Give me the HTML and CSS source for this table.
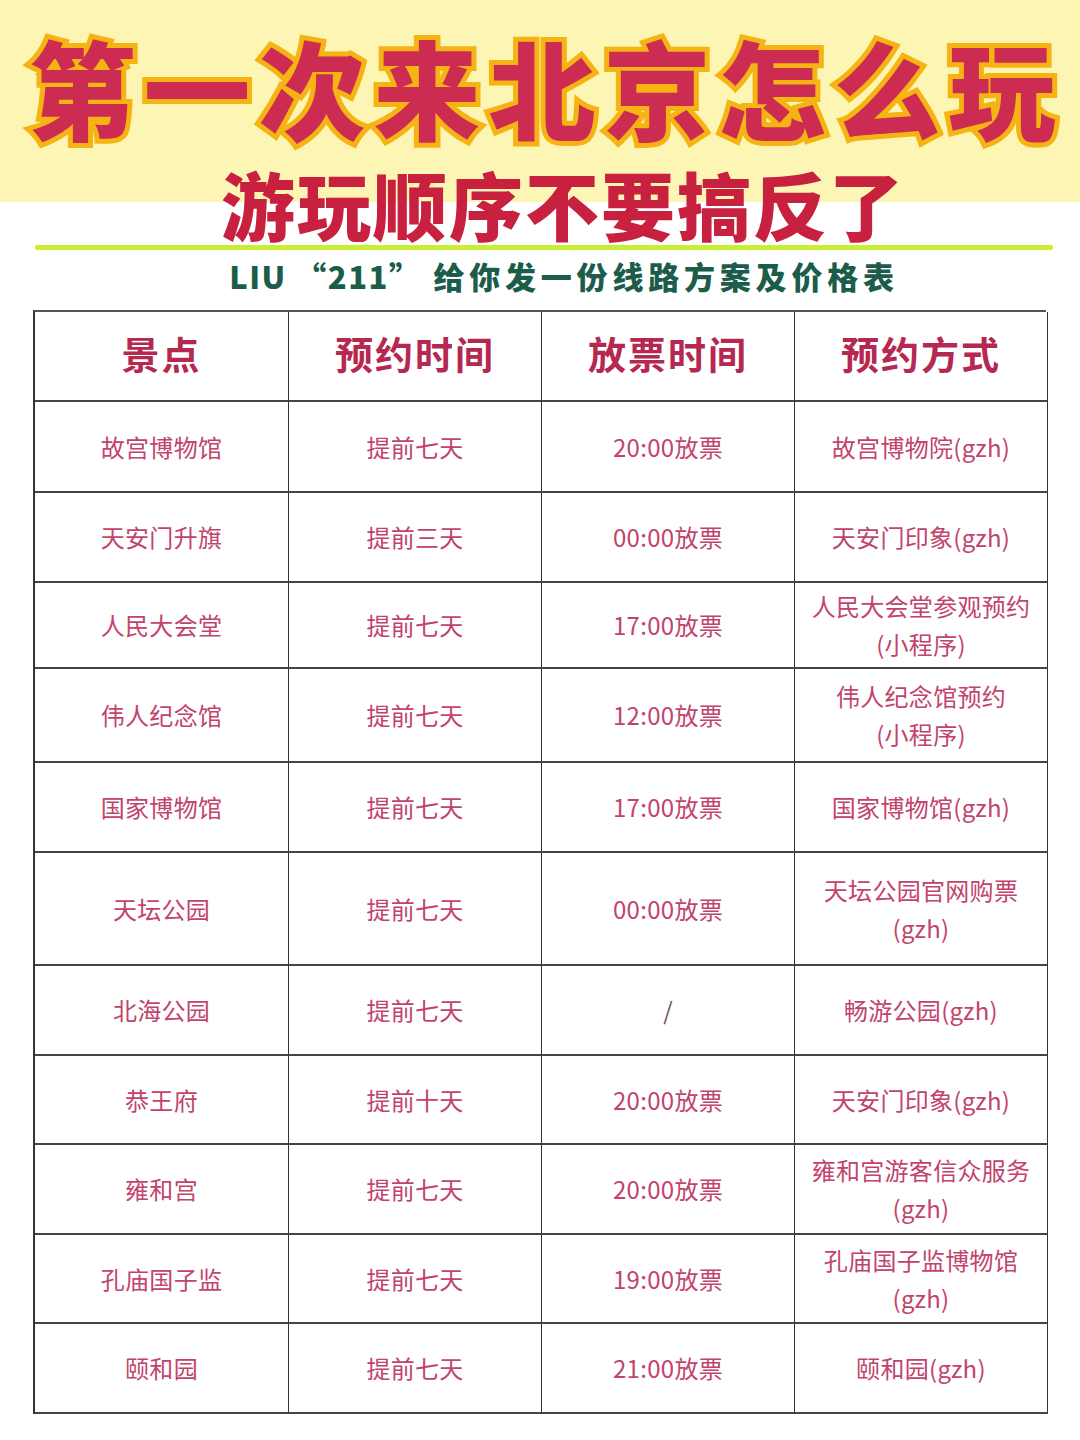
FILE: index.html
```html
<!DOCTYPE html>
<html lang="zh-CN">
<head>
<meta charset="utf-8">
<link rel="stylesheet" href="styles.css">
</head>
<body>
<div class="page">
  <header class="hero">
    <h1 class="title">第一次来北京怎么玩</h1>
    <h2 class="subtitle">游玩顺序不要搞反了</h2>
  </header>
  <div class="rule"></div>
  <p class="tagline"><span class="latin">LIU “211”</span> 给你发一份线路方案及价格表</p>
  <div class="table">
    <div class="cell head">景点</div><div class="cell head">预约时间</div><div class="cell head">放票时间</div><div class="cell head">预约方式</div>
    <div class="cell">故宫博物馆</div><div class="cell">提前七天</div><div class="cell">20:00放票</div><div class="cell">故宫博物院(gzh)</div>
    <div class="cell">天安门升旗</div><div class="cell">提前三天</div><div class="cell">00:00放票</div><div class="cell">天安门印象(gzh)</div>
    <div class="cell">人民大会堂</div><div class="cell">提前七天</div><div class="cell">17:00放票</div><div class="cell">人民大会堂参观预约<br>(小程序)</div>
    <div class="cell">伟人纪念馆</div><div class="cell">提前七天</div><div class="cell">12:00放票</div><div class="cell">伟人纪念馆预约<br>(小程序)</div>
    <div class="cell">国家博物馆</div><div class="cell">提前七天</div><div class="cell">17:00放票</div><div class="cell">国家博物馆(gzh)</div>
    <div class="cell">天坛公园</div><div class="cell">提前七天</div><div class="cell">00:00放票</div><div class="cell">天坛公园官网购票<br>(gzh)</div>
    <div class="cell">北海公园</div><div class="cell">提前七天</div><div class="cell slash">/</div><div class="cell">畅游公园(gzh)</div>
    <div class="cell">恭王府</div><div class="cell">提前十天</div><div class="cell">20:00放票</div><div class="cell">天安门印象(gzh)</div>
    <div class="cell">雍和宫</div><div class="cell">提前七天</div><div class="cell">20:00放票</div><div class="cell">雍和宫游客信众服务<br>(gzh)</div>
    <div class="cell">孔庙国子监</div><div class="cell">提前七天</div><div class="cell">19:00放票</div><div class="cell">孔庙国子监博物馆<br>(gzh)</div>
    <div class="cell">颐和园</div><div class="cell">提前七天</div><div class="cell">21:00放票</div><div class="cell">颐和园(gzh)</div>
  </div>
</div>
</body>
</html>
```

FILE: styles.css
```css
html, body {
  margin: 0;
  padding: 0;
  background: #ffffff;
}
.page {
  width: 1080px;
  height: 1440px;
  overflow: hidden;
  font-family: "Noto Sans CJK SC", "Noto Sans", sans-serif;
  background: linear-gradient(#fdf5b3 0, #fdf5b3 202px, #ffffff 202px);
}
.hero {
  height: 245px;
  display: flex;
  flex-direction: column;
  align-items: center;
}
.title {
  margin: 26px 0 0 0;
  font-size: 107px;
  line-height: 120px;
  font-weight: 900;
  letter-spacing: 8px;
  color: #cc2b52;
  -webkit-text-stroke: 10px #f5b314;
  paint-order: stroke fill;
  white-space: nowrap;
  padding-left: 12px;
}
.subtitle {
  margin: 16px 0 0 46px;
  font-size: 74px;
  line-height: 82px;
  font-weight: 900;
  letter-spacing: 2px;
  color: #c8203f;
  white-space: nowrap;
}
.rule {
  margin: 0 27px 0 35px;
  height: 5px;
  background: #c9ef34;
  border-radius: 2px;
}
.tagline {
  margin: 4px 0 0 0;
  padding-left: 48px;
  height: 48px;
  text-align: center;
  font-size: 31px;
  line-height: 44px;
  font-weight: 900;
  letter-spacing: 4.8px;
  color: #1c5c4b;
  white-space: nowrap;
}
.latin {
  letter-spacing: 1.5px;
}
.table {
  margin: 8px 0 0 33px;
  width: 1013px;
  display: grid;
  grid-template-columns: 254px 253px 253px 253px;
  grid-template-rows: 90px 91px 90px 86px 94px 90px 113px 90px 89px 90px 89px 90px;
  border-top: 2px solid #555;
  border-left: 2px solid #333;
  box-sizing: border-box;
}
.cell {
  border-right: 1.5px solid #333;
  border-bottom: 2px solid #444;
  display: flex;
  align-items: center;
  justify-content: center;
  text-align: center;
  font-size: 24px;
  line-height: 38px;
  color: #c2436c;
  letter-spacing: 0.3px;
}
.head {
  font-size: 38px;
  font-weight: 700;
  color: #b5284f;
  letter-spacing: 2px;
  padding-bottom: 6px;
  box-sizing: border-box;
}
.slash {
  color: #7a5068;
}
```
